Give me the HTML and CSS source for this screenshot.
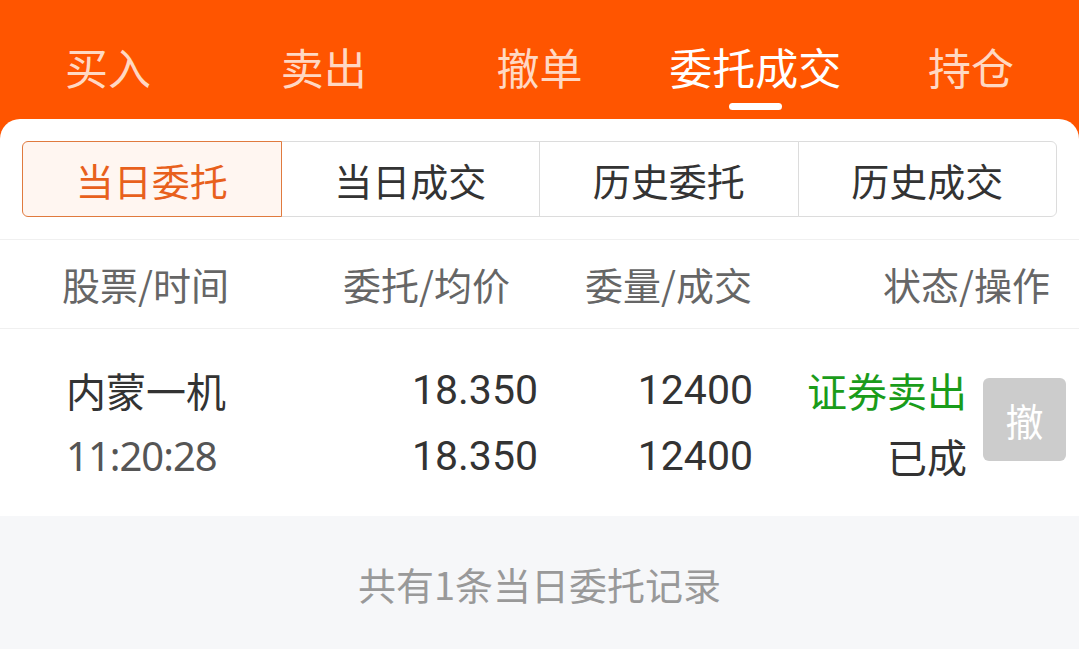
FILE: index.html
```html
<!DOCTYPE html>
<html lang="zh-CN">
<head>
<meta charset="utf-8">
<title>委托成交</title>
<link rel="stylesheet" href="styles.css">
</head>
<body>
<div class="app">
  <nav class="topnav">
    <div class="nav-item"><span class="nav-label">买入</span></div>
    <div class="nav-item"><span class="nav-label">卖出</span></div>
    <div class="nav-item"><span class="nav-label">撤单</span></div>
    <div class="nav-item active"><span class="nav-label">委托成交</span><span class="nav-bar"></span></div>
    <div class="nav-item"><span class="nav-label">持仓</span></div>
  </nav>
  <main class="card">
    <div class="seg-wrap">
      <div class="seg">
        <div class="seg-item active">当日委托</div>
        <div class="seg-item">当日成交</div>
        <div class="seg-item">历史委托</div>
        <div class="seg-item">历史成交</div>
      </div>
    </div>
    <div class="thead">
      <div class="th th-left">股票/时间</div>
      <div class="th">委托/均价</div>
      <div class="th">委量/成交</div>
      <div class="th">状态/操作</div>
    </div>
    <div class="row">
      <div class="cell cell-left">
        <div class="name">内蒙一机</div>
        <div class="time">11:20:28</div>
      </div>
      <div class="cell num">
        <div>18.350</div>
        <div>18.350</div>
      </div>
      <div class="cell num">
        <div>12400</div>
        <div>12400</div>
      </div>
      <div class="cell status">
        <div class="sell">证券卖出</div>
        <div>已成</div>
      </div>
      <div class="cell act">
        <button class="cancel" type="button">撤</button>
      </div>
    </div>
    <footer class="foot">共有1条当日委托记录</footer>
  </main>
</div>
</body>
</html>
```
FILE: styles.css
```css
* { box-sizing: border-box; }
html, body { margin: 0; padding: 0; }
body {
  width: 1079px;
  height: 649px;
  overflow: hidden;
  background: #ff5500;
  font-family: "Noto Sans CJK SC", "Noto Sans", sans-serif;
  color: #333;
}
.app { display: flex; flex-direction: column; height: 649px; }

.topnav {
  display: flex;
  height: 119px;
  background: #ff5500;
  flex: none;
}
.nav-item {
  flex: 1;
  display: flex;
  flex-direction: column;
  align-items: center;
  padding-top: 41px;
}
.nav-label {
  font-size: 43px;
  line-height: 50px;
  color: #ffd8c3;
}
.nav-item.active .nav-label { color: #fff; }
.nav-bar {
  margin-top: 12px;
  width: 53px;
  height: 7px;
  border-radius: 4px;
  background: #fff;
}

.card {
  flex: 1;
  background: #fff;
  border-radius: 20px 20px 0 0;
  display: flex;
  flex-direction: column;
  overflow: hidden;
}
.seg-wrap {
  padding: 22px 22px 22px;
  border-bottom: 1px solid #f0f0f0;
}
.seg {
  display: flex;
  height: 76px;
}
.seg-item {
  flex: 1;
  display: flex;
  align-items: center;
  justify-content: center;
  font-size: 38px;
  color: #333;
  border: 1px solid #dcdcdc;
  margin-left: -1px;
  background: #fff;
}
.seg-item:first-child { margin-left: 0; border-radius: 6px 0 0 6px; }
.seg-item:last-child { border-radius: 0 6px 6px 0; }
.seg-item.active {
  color: #e8601c;
  background: #fff6f1;
  border-color: #e07a3e;
  position: relative;
  z-index: 1;
}

.thead {
  display: grid;
  grid-template-columns: 281px 167px 242px 298px;
  padding-left: 62px;
  height: 89px;
  align-items: center;
  border-bottom: 1px solid #f0f0f0;
}
.th {
  font-size: 38px;
  color: #666;
  text-align: right;
  line-height: 46px;
}
.th-left { text-align: left; }

.row {
  display: grid;
  grid-template-columns: 272px 200px 215px 214px 16px 83px;
  grid-template-areas: "a b c d . e";
  padding-left: 66px;
  height: 187px;
  align-items: center;
}
.cell { font-size: 40px; line-height: 66px; color: #333; }
.cell-left { grid-area: a; }
.num { text-align: right; font-family: "Roboto", "Noto Sans", sans-serif; font-size: 41px; }
.num:nth-child(2) { grid-area: b; }
.num:nth-child(3) { grid-area: c; }
.status { grid-area: d; text-align: right; }
.act { grid-area: e; display: flex; padding-bottom: 6px; }
.name { color: #333; }
.time { color: #555; font-family: "Noto Sans", "Roboto", sans-serif; font-size: 40px; letter-spacing: -1px; }
.sell { color: #1a9c1a; }
.cancel {
  width: 83px;
  height: 83px;
  border: none;
  border-radius: 6px;
  background: #cccccc;
  color: #fff;
  font-family: "Noto Sans CJK SC", sans-serif;
  font-size: 38px;
  padding: 0;
}

.foot {
  flex: 1;
  background: #f6f7f9;
  display: flex;
  justify-content: center;
  padding-top: 45px;
  font-size: 38px;
  line-height: 46px;
  color: #999;
}
```
